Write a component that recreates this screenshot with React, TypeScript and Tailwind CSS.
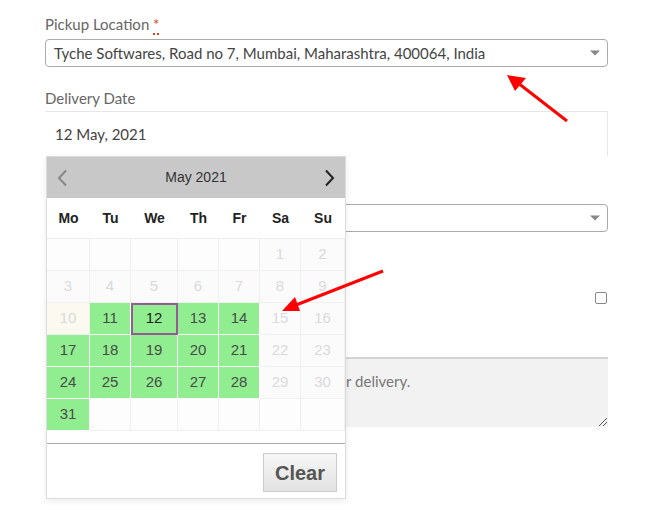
import React from "react";

type Cell = { d?: number; kind: "empty" | "off" | "on" | "today" };

const weeks: Cell[][] = [
  [
    { kind: "empty" }, { kind: "empty" }, { kind: "empty" }, { kind: "empty" }, { kind: "empty" },
    { d: 1, kind: "off" }, { d: 2, kind: "off" },
  ],
  [3, 4, 5, 6, 7, 8, 9].map((d) => ({ d, kind: "off" as const })),
  [
    { d: 10, kind: "today" }, { d: 11, kind: "on" }, { d: 12, kind: "on" }, { d: 13, kind: "on" },
    { d: 14, kind: "on" }, { d: 15, kind: "off" }, { d: 16, kind: "off" },
  ],
  [
    { d: 17, kind: "on" }, { d: 18, kind: "on" }, { d: 19, kind: "on" }, { d: 20, kind: "on" },
    { d: 21, kind: "on" }, { d: 22, kind: "off" }, { d: 23, kind: "off" },
  ],
  [
    { d: 24, kind: "on" }, { d: 25, kind: "on" }, { d: 26, kind: "on" }, { d: 27, kind: "on" },
    { d: 28, kind: "on" }, { d: 29, kind: "off" }, { d: 30, kind: "off" },
  ],
  [
    { d: 31, kind: "on" }, { kind: "empty" }, { kind: "empty" }, { kind: "empty" }, { kind: "empty" },
    { kind: "empty" }, { kind: "empty" },
  ],
];

const cellClass = {
  empty: "bg-[#fdfdfd] border-[#f0f0f0]",
  off: "bg-[#fbfbfb] text-[#dadada] border-[#f0f0f0]",
  today: "bg-[#fbf9f0] text-[#dadada] border-[#f0f0f0]",
  on: "bg-[#90ee90] text-[#4a4a4a] border-white",
};

const Caret = () => (
  <span className="absolute right-[7px] top-1/2 -translate-y-1/2 border-x-[5px] border-t-[5px] border-x-transparent border-t-[#888]" />
);

const Calendar = () => (
  <div className="absolute left-[46px] top-[156px] w-[300px] border border-[#dcdcdc] bg-white font-['Liberation_Sans',Arial,sans-serif] shadow-[0_2px_6px_rgba(0,0,0,0.08)]">
    <div className="flex h-[41px] items-center justify-between bg-[#c8c8c8] px-[9px]">
      <svg width="12" height="18" viewBox="0 0 12 18">
        <path d="M10 1.5 3 9l7 7.5" fill="none" stroke="#888" strokeWidth="2" />
      </svg>
      <span className="text-[14px] text-[#333]">May 2021</span>
      <svg width="12" height="18" viewBox="0 0 12 18">
        <path d="M2 1.5 9 9l-7 7.5" fill="none" stroke="#222" strokeWidth="2" />
      </svg>
    </div>
    <div className="grid h-[40px] grid-cols-[43px_41px_47px_41px_41px_41px_44px] items-center text-center text-[14px] font-bold text-[#222]">
      {["Mo", "Tu", "We", "Th", "Fr", "Sa", "Su"].map((n) => (
        <span key={n}>{n}</span>
      ))}
    </div>
    <div className="grid grid-cols-[43px_41px_47px_41px_41px_41px_44px] border-t border-[#eee]">
      {weeks.flat().map((c, i) => (
        <div
          key={i}
          className={`flex h-[32px] items-center justify-center border-b border-r text-[15px] ${cellClass[c.kind]} ${
            c.d === 12 ? "outline-2 -outline-offset-2 outline-[#955a95] text-[#222]" : ""
          }`}
        >
          {c.d}
        </div>
      ))}
    </div>
    <div className="h-[12px]" />
    <div className="flex h-[55px] justify-end border-t border-[#aaa] pr-[8px] pt-[9px]">
      <button className="h-[39px] w-[74px] border border-[#ccc] bg-gradient-to-b from-[#f6f6f6] to-[#e2e2e2] text-[20px] font-bold text-[#555]">
        Clear
      </button>
    </div>
  </div>
);

const Arrows = () => (
  <svg className="pointer-events-none absolute inset-0" width="646" height="521">
    <line x1="567" y1="121" x2="518" y2="83" stroke="#f00" strokeWidth="3" />
    <polygon points="507,75 526,78 515,91" fill="#f00" />
    <line x1="383" y1="271" x2="296" y2="305" stroke="#f00" strokeWidth="3" />
    <polygon points="282,311 295,297 300,311" fill="#f00" />
  </svg>
);

export default function App() {
  return (
    <div className="relative h-[521px] w-[646px] overflow-hidden bg-white font-['Lato','Open_Sans',sans-serif] text-[15px] text-[#555]">
      <div className="w-[608px] pl-[45px] pt-[14px]">
        <label className="block leading-[20px] text-[#666]">
          Pickup Location{" "}
          <abbr className="text-[#e2401c] no-underline [border-bottom:2px_dotted_#e2401c]">*</abbr>
        </label>
        <div className="relative mt-[5px] flex h-[28px] items-center rounded-[4px] border border-[#aaa] pl-[8px] text-[#444]">
          Tyche Softwares, Road no 7, Mumbai, Maharashtra, 400064, India
          <Caret />
        </div>
        <label className="mt-[21px] block leading-[20px] text-[#666]">Delivery Date</label>
        <div className="mt-[3px] flex h-[45px] items-center border-r border-t border-[#e6e6e6] pl-[10px] text-[#444]">
          12 May, 2021
        </div>
        <label className="mt-[14px] block pl-[4px] leading-[20px] text-[#666]">
          Pickup Time <span className="text-[#e2401c]">*</span>
        </label>
        <div className="relative ml-[3px] mt-[14px] h-[28px] rounded-[4px] border border-[#aaa]">
          <Caret />
        </div>
        <div className="mt-[59px] flex h-[14px] items-center justify-between pl-[4px]">
          <span>Gift wrap</span>
          <span className="mr-[1px] h-[12px] w-[12px] rounded-[2px] border border-[#888]" />
        </div>
        <label className="mt-[27px] block pl-[4px] leading-[20px] text-[#666]">Order notes</label>
        <div className="relative ml-[3px] mt-[5px] h-[70px] border-t-2 border-[#d4d4d4] bg-[#f2f2f2] pl-[9px] pt-[11px] text-[#777]">
          Notes about your order, e.g. special notes for delivery.
          <svg className="absolute bottom-[1px] right-[1px]" width="9" height="9" viewBox="0 0 9 9">
            <path d="M9 1 1 9M9 5 5 9" stroke="#555" strokeWidth="1" />
          </svg>
        </div>
      </div>
      <Calendar />
      <Arrows />
    </div>
  );
}
